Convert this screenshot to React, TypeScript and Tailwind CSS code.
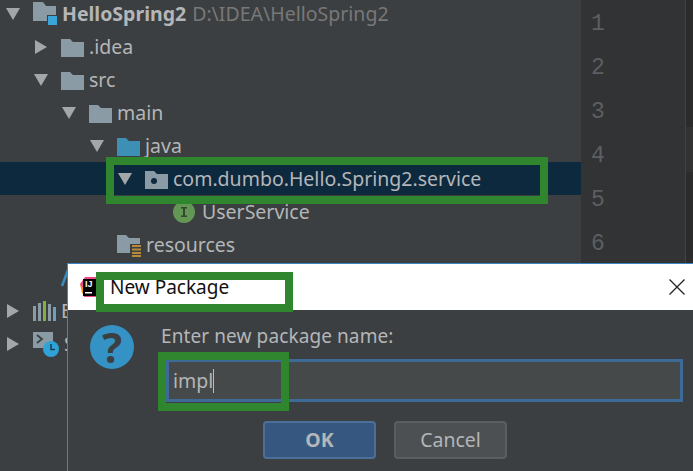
const ArrowDown = () => (
  <svg width="16" height="14" viewBox="0 0 16 14" className="shrink-0">
    <polygon points="1,1 15,1 8,13" fill="#a4a7a9" />
  </svg>
);

const ArrowRight = () => (
  <svg width="16" height="14" viewBox="0 0 16 14" className="shrink-0">
    <polygon points="2,0 14,7 2,14" fill="#a4a7a9" />
  </svg>
);

const Folder = ({ color = "#8a9ba6" }: { color?: string }) => (
  <svg width="23" height="19" viewBox="0 0 23 19" className="shrink-0">
    <path d="M0 1h9l3 3h11v15H0z" fill={color} />
  </svg>
);

const ProjectFolder = () => (
  <svg width="24" height="24" viewBox="0 0 24 24" className="shrink-0">
    <path d="M0 0h10l3 4h10v15H0z" fill="#8a9ba6" />
    <rect x="14" y="13" width="10" height="11" fill="#3c3f41" />
    <rect x="15" y="14" width="9" height="9" fill="#3aa5d8" />
  </svg>
);

const PackageFolder = () => (
  <svg width="23" height="19" viewBox="0 0 23 19" className="shrink-0">
    <path d="M0 1h9l3 3h11v15H0z" fill="#8a9ba6" />
    <circle cx="9" cy="11" r="3" fill="#0d293e" />
  </svg>
);

const ResourcesFolder = () => (
  <svg width="24" height="23" viewBox="0 0 24 23" className="shrink-0">
    <path d="M0 1h9l3 3h11v15H0z" fill="#8a9ba6" />
    <rect x="13" y="10" width="11" height="13" fill="#3c3f41" />
    <path d="M15 11h9v2h-9zM15 14.500h9v2h-9zM15 18h9v2h-9zM15 21h9v2h-9z" fill="#b58b3a" />
  </svg>
);

const InterfaceIcon = () => (
  <svg width="24" height="22" viewBox="0 0 24 22" className="shrink-0">
    <circle cx="11" cy="11" r="11" fill="#629755" />
    <path d="M8 6h6v1.500h-2v7h2V16H8v-1.500h2v-7H8z" fill="#35482f" />
  </svg>
);

const LibrariesIcon = () => (
  <svg width="23" height="20" viewBox="0 0 23 20" className="shrink-0">
    <rect x="0" y="5" width="3" height="15" fill="#8a9ba6" />
    <rect x="5" y="2" width="3" height="18" fill="#8a9ba6" />
    <rect x="10" y="0" width="3" height="20" fill="#7fb13f" />
    <rect x="15" y="3" width="3" height="17" fill="#8a9ba6" />
    <rect x="20" y="6" width="3" height="14" fill="#6c9fc0" />
  </svg>
);

const ScratchesIcon = () => (
  <svg width="26" height="26" viewBox="0 0 26 26" className="shrink-0">
    <rect x="0" y="1" width="20" height="16" fill="#8a9ba6" />
    <path d="M4 4l5 4-5 4" fill="none" stroke="#3c3f41" strokeWidth="1.800" />
    <circle cx="18" cy="18" r="8" fill="#2fa3d8" />
    <path d="M18 13v5.500h4" fill="none" stroke="#1c3d50" strokeWidth="1.500" />
  </svg>
);

const ImlIcon = () => (
  <svg width="23" height="18" viewBox="0 0 23 18" className="shrink-0">
    <path d="M1 17L7 1" fill="none" stroke="#3a8dbb" strokeWidth="2.500" />
  </svg>
);

const IdeaLogo = () => (
  <svg width="18" height="24" viewBox="0 0 18 24" className="shrink-0">
    <path d="M0 9L5 2l13 0v20H4z" fill="#f0468a" />
    <path d="M0 9l4 6 2 7-4-4z" fill="#f89a1c" />
    <rect x="3" y="4" width="15" height="17" fill="#000" />
    <text x="5" y="12" fontSize="9" fontWeight="700" fill="#fff" fontFamily="Liberation Sans, sans-serif">IJ</text>
    <rect x="5" y="17" width="7" height="1.500" fill="#fff" />
  </svg>
);

const rows = [
  { left: 5, arrow: <ArrowDown />, icon: <ProjectFolder />, label: "HelloSpring2", hint: "D:\\IDEA\\HelloSpring2" },
  { left: 33, arrow: <ArrowRight />, icon: <Folder />, label: ".idea" },
  { left: 33, arrow: <ArrowDown />, icon: <Folder />, label: "src" },
  { left: 61, arrow: <ArrowDown />, icon: <Folder />, label: "main" },
  { left: 89, arrow: <ArrowDown />, icon: <Folder color="#3d8fb5" />, label: "java" },
  { left: 117, arrow: <ArrowDown />, icon: <PackageFolder />, label: "com.dumbo.Hello.Spring2.service", selected: true },
  { left: 145, icon: <InterfaceIcon />, label: "UserService" },
  { left: 89, icon: <ResourcesFolder />, label: "resources" },
  { left: 33, icon: <ImlIcon />, label: "" },
  // only the first letter of these two shows beside the dialog
  { left: 5, arrow: <ArrowRight />, icon: <LibrariesIcon />, label: "E" },
  { left: 5, arrow: <ArrowRight />, icon: <ScratchesIcon />, label: "S" },
];

const App = () => {
  return (
    <div className="relative flex h-[471px] w-[693px] overflow-hidden bg-[#3c3f41] font-['Noto_Sans',sans-serif] text-[19.5px] text-[#b4b6b8]">
      {/* project tree */}
      <div className="-mt-[3px] flex w-[581px] shrink-0 flex-col">
        {rows.map((row, i) => (
          <div
            key={i}
            className={`flex h-[33px] shrink-0 items-center pt-[1px] ${row.selected ? "bg-[#0d293e]" : ""}`}
          >
            <div className="shrink-0" style={{ width: row.left }} />
            <div className="flex w-[28px] shrink-0 items-center">{row.arrow}</div>
            {row.icon}
            <span className={`ml-[5px] whitespace-nowrap ${i === 0 ? "font-bold" : ""}`}>{row.label}</span>
            {row.hint && <span className="ml-[6px] whitespace-nowrap text-[#787878]">{row.hint}</span>}
          </div>
        ))}
      </div>

      {/* gutter */}
      <div className="flex w-[104px] shrink-0 flex-col bg-[#313335] pt-[2px] pl-[10px] font-['Liberation_Mono',monospace] text-[23px] text-[#5c5f61]">
        {[1, 2, 3, 4, 5, 6].map((n) => (
          <div key={n} className="flex h-[44px] shrink-0 items-center">{n}</div>
        ))}
      </div>

      {/* editor */}
      <div className="flex-1 border-l border-l-[#414446] bg-[#2b2b2b] pt-[127px]">
        <div className="h-[45px] bg-[#323232]" />
      </div>

      {/* dialog */}
      <div className="absolute top-[263px] right-0 bottom-0 left-[67px] flex flex-col border-t border-l border-[#3c84c4] bg-[#3c3f41]">
        <div className="flex h-[46px] shrink-0 items-center bg-white pr-[8px] pl-[12px]">
          <IdeaLogo />
          <span className="ml-[12px] text-[19px] text-[#111111]">New Package</span>
          <svg width="16" height="16" viewBox="0 0 16 16" className="ml-auto">
            <path d="M0.500 0.500l15 15M15.500 0.500l-15 15" stroke="#222222" strokeWidth="1.300" />
          </svg>
        </div>
        <div className="flex flex-1">
          <div className="mt-[15px] ml-[22px] flex h-[44px] w-[44px] shrink-0 items-center justify-center rounded-full bg-[#3592c4] text-[42px] leading-none font-bold text-[#3c3f41]">
            ?
          </div>
          <div className="ml-[27px] flex flex-col">
            <div className="mt-[13px] h-[26px] text-[19px] leading-[26px] tracking-[0.1px] whitespace-nowrap">Enter new package name:</div>
            <div className="mt-[10px] ml-[5px] flex h-[43px] w-[517px] items-center border-[3px] border-[#3d6a97] bg-[#45494a] pl-[4px]">
              <span>impl</span>
              <span className="h-[24px] w-[1px] bg-[#bbbbbb]" />
            </div>
            <div className="mt-[19px] ml-[102px] flex gap-[18px]">
              <button className="flex h-[38px] w-[113px] items-center justify-center rounded-[4px] border-2 border-[#4a6f98] bg-[#365880] font-bold">
                OK
              </button>
              <button className="flex h-[38px] w-[113px] items-center justify-center rounded-[4px] border-2 border-[#5b5e60] bg-[#4c5052]">
                Cancel
              </button>
            </div>
          </div>
        </div>
      </div>

      {/* green annotation boxes */}
      <div className="absolute top-[157px] left-[106px] h-[47px] w-[442px] border-[8px] border-[#2f862f]" />
      <div className="absolute top-[272px] left-[96px] h-[40px] w-[197px] border-[8px] border-[#2f862f]" />
      <div className="absolute top-[352px] left-[158px] h-[59px] w-[131px] border-[8px] border-[#2f862f]" />
    </div>
  );
};

export default App;
